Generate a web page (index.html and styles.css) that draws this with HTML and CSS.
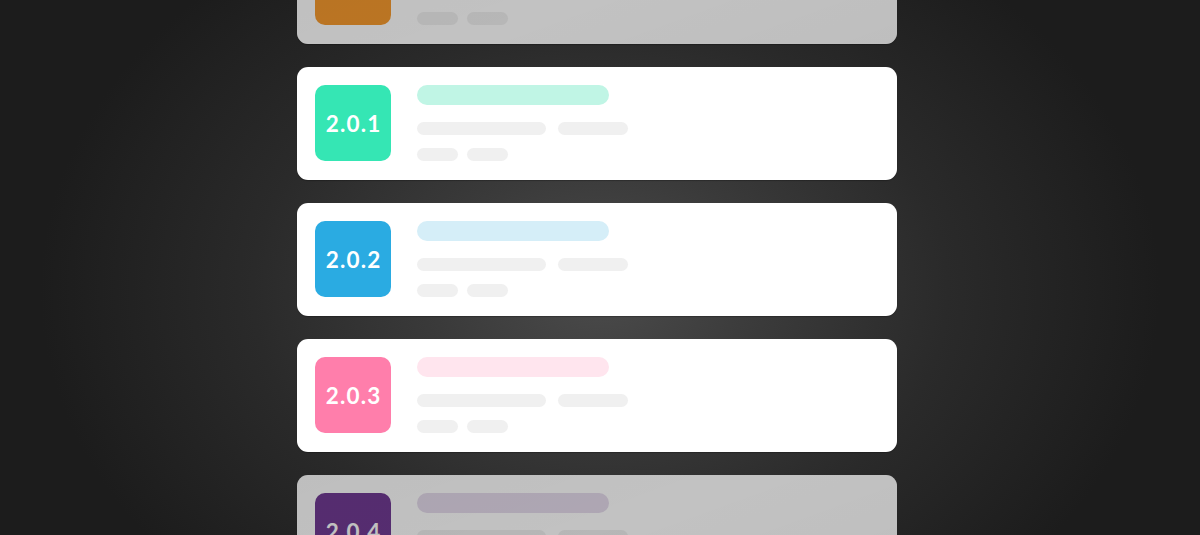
FILE: index.html
```html
<!DOCTYPE html>
<html lang="en">
<head>
<meta charset="utf-8">
<title>Releases</title>
<link rel="stylesheet" href="styles.css">
</head>
<body>
<div class="stage">
  <div class="list">
    <div class="card dim">
      <div class="badge orange">2.0.0</div>
      <div class="lines">
        <div class="title t-orange"></div>
        <div class="row"><span class="bar w129"></span><span class="bar w70"></span></div>
        <div class="row"><span class="bar w41"></span><span class="bar w41"></span></div>
      </div>
    </div>
    <div class="card">
      <div class="badge green">2.0.1</div>
      <div class="lines">
        <div class="title t-green"></div>
        <div class="row"><span class="bar w129"></span><span class="bar w70"></span></div>
        <div class="row"><span class="bar w41"></span><span class="bar w41"></span></div>
      </div>
    </div>
    <div class="card">
      <div class="badge blue">2.0.2</div>
      <div class="lines">
        <div class="title t-blue"></div>
        <div class="row"><span class="bar w129"></span><span class="bar w70"></span></div>
        <div class="row"><span class="bar w41"></span><span class="bar w41"></span></div>
      </div>
    </div>
    <div class="card">
      <div class="badge pink">2.0.3</div>
      <div class="lines">
        <div class="title t-pink"></div>
        <div class="row"><span class="bar w129"></span><span class="bar w70"></span></div>
        <div class="row"><span class="bar w41"></span><span class="bar w41"></span></div>
      </div>
    </div>
    <div class="card dim">
      <div class="badge purple">2.0.4</div>
      <div class="lines">
        <div class="title t-purple"></div>
        <div class="row"><span class="bar w129"></span><span class="bar w70"></span></div>
        <div class="row"><span class="bar w41"></span><span class="bar w41"></span></div>
      </div>
    </div>
  </div>
</div>
</body>
</html>
```
FILE: styles.css
```css
html, body {
  margin: 0;
  padding: 0;
  height: 100%;
}
body {
  overflow: hidden;
  font-family: "Lato", "Open Sans", sans-serif;
  background: #1b1b1b;
}
.stage {
  height: 535px;
  overflow: hidden;
  background: radial-gradient(ellipse 560px 420px at 600px 290px, #4b4b4b 0%, #3a3a3a 30%, #2a2a2a 62%, #1c1c1c 100%);
}
.list {
  width: 600px;
  margin: 0 0 0 297px;
  transform: translateY(-69px);
  display: flex;
  flex-direction: column;
  gap: 23px;
}
.card {
  position: relative;
  flex: none;
  height: 113px;
  box-sizing: border-box;
  background: #ffffff;
  border-radius: 11px;
  box-shadow: 0 1px 1px rgba(0, 0, 0, 0.25);
  padding: 18px;
  display: flex;
  gap: 26px;
}
.card.dim::after {
  content: "";
  position: absolute;
  inset: 0;
  border-radius: 11px;
  background: linear-gradient(160deg, rgba(0,0,0,0.255), rgba(0,0,0,0.24) 50%, rgba(0,0,0,0.255));
}
.badge {
  width: 76px;
  height: 76px;
  flex: none;
  border-radius: 10px;
  color: #ffffff;
  font-weight: 700;
  font-size: 22.5px;
  letter-spacing: 1.2px;
  text-indent: 1.2px;
  display: flex;
  align-items: center;
  justify-content: center;
}
.orange { background: #f69a2e; }
.green { background: #35e6b4; }
.blue { background: #2aabe2; }
.pink { background: #ff7eab; }
.purple { background: #713b94; }
.lines {
  display: flex;
  flex-direction: column;
}
.title {
  width: 192px;
  height: 20px;
  border-radius: 10px;
}
.t-orange { background: #fde6cc; }
.t-green { background: #c0f5e5; }
.t-blue { background: #d5eef8; }
.t-pink { background: #ffe5ee; }
.t-purple { background: #e5dbec; }
.row {
  display: flex;
  gap: 12px;
}
.row:nth-child(2) { margin-top: 17px; }
.row:nth-child(3) { margin-top: 13px; }
.bar {
  display: block;
  height: 13px;
  border-radius: 7px;
  background: #f0f0f0;
}
.w129 { width: 129px; }
.w70 { width: 70px; }
.w41 { width: 41px; }
.row:nth-child(3) .bar + .bar { margin-left: -3px; }
```
